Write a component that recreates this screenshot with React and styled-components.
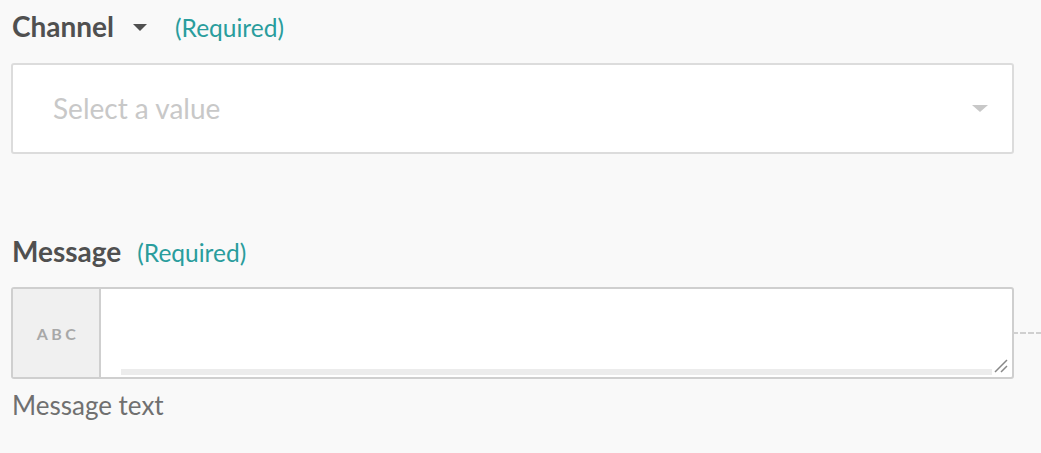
import React from "react";
import styled, { createGlobalStyle } from "styled-components";

const Global = createGlobalStyle`
  *, *::before, *::after { box-sizing: border-box; }
  html, body {
    margin: 0;
    background: #f9f9f9;
    font-family: Lato, "Open Sans", sans-serif;
  }
`;

const Page = styled.div`
  padding: 6px 27px 0 11px;
  display: flex;
  flex-direction: column;
`;

const Field = styled.div`
  display: flex;
  flex-direction: column;
  margin-bottom: ${(p) => p.gap || 0}px;
`;

const LabelRow = styled.div`
  display: flex;
  align-items: center;
  height: 40px;
  padding-left: 1px;
  margin-bottom: ${(p) => p.gap}px;
`;

const Label = styled.span`
  font-size: 28px;
  font-weight: 700;
  color: #505050;
`;

const Caret = styled.span`
  width: 0;
  height: 0;
  border-left: 7px solid transparent;
  border-right: 7px solid transparent;
  border-top: 7px solid #505050;
  margin: 2px 0 0 ${(p) => p.left}px;
`;

const Required = styled.span`
  font-size: 24.5px;
  color: #2a9d9d;
  margin-left: ${(p) => p.left}px;
  margin-top: 2px;
`;

const SelectBox = styled.div`
  height: 91px;
  border: 2px solid #dcdcdc;
  border-radius: 3px;
  background: #fff;
  display: flex;
  align-items: center;
  justify-content: space-between;
  padding: 0 24px 0 40px;
`;

const Placeholder = styled.span`
  font-size: 28px;
  color: #c8c8c8;
  margin-bottom: 2px;
`;

const SelectArrow = styled.span`
  width: 0;
  height: 0;
  border-left: 8px solid transparent;
  border-right: 8px solid transparent;
  border-top: 7px solid #c8c8c8;
`;

const InputRow = styled.div`
  position: relative;
  display: flex;
  height: 92px;
  border: 2px solid #cfcfcf;
  border-radius: 3px;
  background: #fff;
`;

const Prefix = styled.div`
  width: 88px;
  background: #f0f0f0;
  border-right: 2px solid #cfcfcf;
  display: flex;
  align-items: center;
  justify-content: center;
  font-size: 16px;
  font-weight: 700;
  letter-spacing: 3.5px;
  color: #a8a8a8;
  padding-left: 4px;
`;

const TextArea = styled.div`
  flex: 1;
  position: relative;
  display: flex;
  flex-direction: column;
  justify-content: flex-end;
`;

const Scrollbar = styled.div`
  height: 6px;
  margin: 0 20px 2px 20px;
  background: #ececec;
`;

const Resize = styled.svg`
  position: absolute;
  right: 4px;
  bottom: 4px;
`;

const Connector = styled.div`
  position: absolute;
  left: 100%;
  top: 43px;
  width: 30px;
  border-top: 2px dashed #d0d0d0;
`;

const Hint = styled.div`
  font-size: 26px;
  color: #707070;
  margin-top: 10px;
  padding-left: 1px;
`;

export default function App() {
  return (
    <>
      <Global />
      <Page>
        <Field gap={77}>
          <LabelRow gap={17}>
            <Label>Channel</Label>
            <Caret left={19} />
            <Required left={28}>(Required)</Required>
          </LabelRow>
          <SelectBox>
            <Placeholder>Select a value</Placeholder>
            <SelectArrow />
          </SelectBox>
        </Field>
        <Field>
          <LabelRow gap={16}>
            <Label>Message</Label>
            <Required left={16}>(Required)</Required>
          </LabelRow>
          <InputRow>
            <Prefix>ABC</Prefix>
            <TextArea>
              <Scrollbar />
              <Resize width="14" height="14" viewBox="0 0 14 14">
                <path d="M1 13 L13 1 M7 13 L13 7" stroke="#888" strokeWidth="1.5" />
              </Resize>
            </TextArea>
            <Connector />
          </InputRow>
          <Hint>Message text</Hint>
        </Field>
      </Page>
    </>
  );
}
